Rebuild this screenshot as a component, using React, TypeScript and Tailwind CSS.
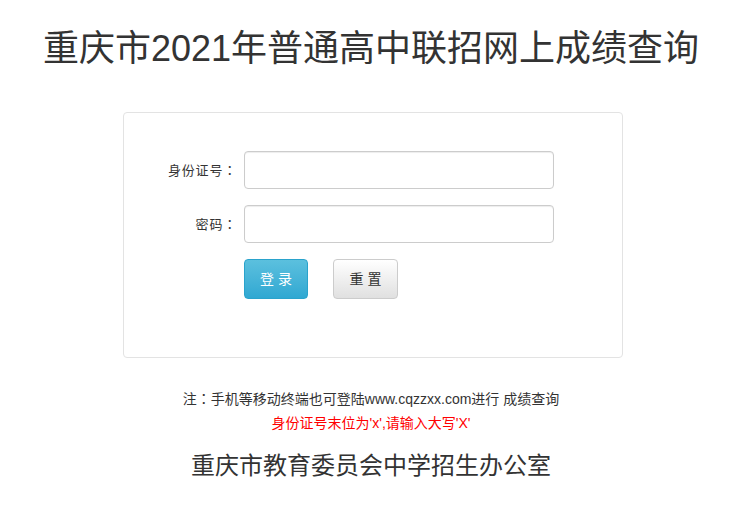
import React from "react";

const font = { fontFamily: '"Liberation Sans", "Noto Sans CJK SC", sans-serif' };
// centred full-width colon like the original page
const Colon = () => <span style={{ fontFamily: '"Noto Sans CJK TC", sans-serif' }}>：</span>;

export default function App() {
  return (
    <div className="min-h-[516px] bg-white text-[#333]" style={font}>
      <h1 className="pt-[29px] text-center text-[36px] leading-[40px] font-normal">
        重庆市2021年普通高中联招网上成绩查询
      </h1>

      <div className="ml-[123px] mt-[43px] w-[500px] rounded-[4px] border border-[#e3e3e3] pt-[38px] pb-[58px]">
        <div className="flex items-center">
          <label className="w-[120px] pr-[7px] text-right text-[13px] tracking-[0.8px]">身份证号<Colon /></label>
          <input className="h-[38px] w-[310px] rounded-[4px] border border-[#ccc] px-3 text-sm outline-none shadow-[inset_0_1px_1px_rgba(0,0,0,0.075)]" />
        </div>
        <div className="mt-[16px] flex items-center">
          <label className="w-[120px] pr-[7px] text-right text-[13px] tracking-[0.8px]">密码<Colon /></label>
          <input type="password" className="h-[38px] w-[310px] rounded-[4px] border border-[#ccc] px-3 text-sm outline-none shadow-[inset_0_1px_1px_rgba(0,0,0,0.075)]" />
        </div>
        <div className="mt-[16px] flex gap-[25px] pl-[120px]">
          <button className="h-[40px] w-[64px] rounded-[4px] border border-[#2aa3cc] bg-gradient-to-b from-[#5bc0de] to-[#2fa8d2] text-[14px] text-white">
            登 录
          </button>
          <button className="h-[40px] w-[65px] rounded-[4px] border border-[#ccc] bg-gradient-to-b from-white to-[#e0e0e0] text-[14px] text-[#333]">
            重 置
          </button>
        </div>
      </div>

      <p className="mt-[30px] text-center text-[14px] leading-[20px]">
        注<Colon />手机等移动终端也可登陆www.cqzzxx.com进行 成绩查询
      </p>
      <p className="mt-[4px] text-center text-[14px] leading-[20px] text-[#ff0000]">
        身份证号末位为'x',请输入大写'X'
      </p>
      <p className="mt-[17px] text-center text-[24px] leading-[32px]">
        重庆市教育委员会中学招生办公室
      </p>
    </div>
  );
}
